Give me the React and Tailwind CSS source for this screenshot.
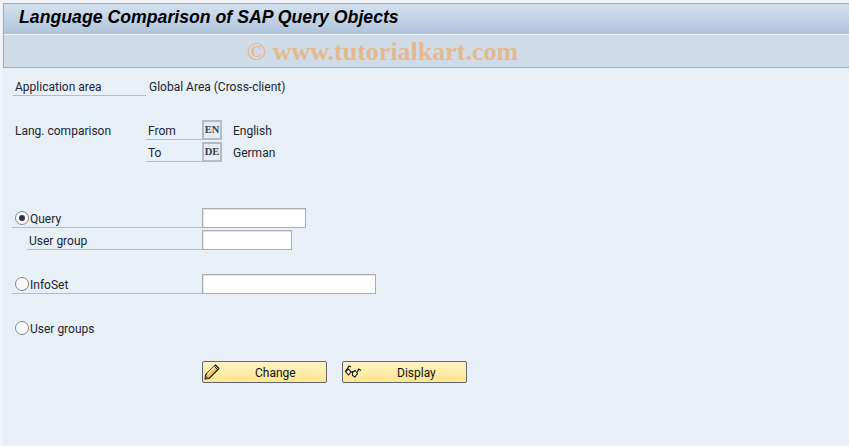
const font = { fontFamily: 'Roboto, sans-serif' };

function Radio({ checked }) {
    return (
        <span className="flex h-[14px] w-[14px] shrink-0 items-center justify-center rounded-full border border-[#7d8690] bg-[#f7f9fb]">
            {checked && <span className="h-[6px] w-[6px] rounded-full bg-[#2b3440]" />}
        </span>
    );
}

function Input({ width }) {
    return <div className={`h-[20px] border border-[#a9adb1] bg-white shadow-[inset_1px_1px_0_#dfe3e6] ${width}`} />;
}

function LangKey({ code }) {
    return (
        <div className="flex h-[20px] w-[20px] items-center justify-center border-2 border-[#b4bbc2] bg-[#e3ebf3] font-['Liberation_Serif',serif] text-[10.5px] font-bold text-[#3f3b46]">
            {code}
        </div>
    );
}

function Pencil() {
    return (
        <svg width="16" height="16" viewBox="0 0 16 16" className="shrink-0">
            <path d="M11.5 1 L15 4.5 L5 14.5 L1 15 L1.5 11 Z" fill="#f6c25a" stroke="#1c1c1c" strokeWidth="1.1" strokeLinejoin="round" />
            <path d="M3.5 10 L11 2.5" stroke="#fff2c8" strokeWidth="1.2" />
            <path d="M10.5 2.5 L13.5 5.5" stroke="#1c1c1c" strokeWidth="1" />
            <path d="M1.5 12 L4 14.5" stroke="#7a5a20" strokeWidth="1.2" />
        </svg>
    );
}

function Glasses() {
    return (
        <svg width="18" height="16" viewBox="0 0 18 16" fill="none" stroke="#111" strokeWidth="1.1" className="shrink-0">
            <path d="M1.5 7.5 L5 2 L7 3" />
            <path d="M1.5 7.5 L4.5 5 L7 8 L4.5 11 Z" fill="#fff7d0" />
            <path d="M7 8 L9 7.5" />
            <path d="M8.5 8.5 L11 6.5 L13.5 9.5 L11 13 L8.5 11.5 Z" fill="#fff7d0" />
            <path d="M13.5 8 L14.5 5 L17 6.5" />
        </svg>
    );
}

function SapButton({ icon, label, textClass }) {
    return (
        <button className="relative flex h-[22px] w-[125px] items-center rounded-[2px] border border-[#62676d] bg-gradient-to-b from-[#fff3c2] to-[#fee68f] pl-[1px] text-[12px] text-[#111]">
            {icon}
            <span className={`absolute top-[2px] ${textClass}`}>{label}</span>
        </button>
    );
}

export default function App() {
    return (
        <div className="h-[446px] w-[849px] overflow-hidden bg-[#e8eff7] pl-[3px] text-[12px] text-[#1c2530] shadow-[inset_2px_0_0_#f1f5f9]" style={font}>
            {/* Title and toolbar */}
            <div className="h-[3px] -ml-[3px] bg-[#eef2f6]" />
            <div className="border-t border-l border-[#a3adb8]">
                <div className="flex h-[30px] items-center bg-gradient-to-b from-[#d5e1ee] to-[#aec4dc] pb-[4px] pl-[15px] font-['Liberation_Sans',sans-serif] text-[17.7px] font-bold italic text-black">
                    Language Comparison of SAP Query Objects
                </div>
                <div className="flex h-[34px] items-center justify-center border-t border-b border-t-[#eef3f8] border-b-[#a3adb8] bg-[#cfdce7] pr-[88px] font-['Liberation_Serif',serif] text-[26px] font-bold text-[#e5b98e]">
                    © www.tutorialkart.com
                </div>
            </div>

            {/* Form */}
            <div className="-ml-[3px] pt-[8px]">
                <div className="flex h-[22px]">
                    <div className="ml-[13px] h-[20px] w-[133px] border-b border-[#b4bcc4] pl-[2px] leading-[22px]">Application area</div>
                    <div className="ml-[3px] leading-[22px]">Global Area (Cross-client)</div>
                </div>

                <div className="mt-[22px] flex h-[22px]">
                    <div className="ml-[15px] w-[131px] leading-[22px]">Lang. comparison</div>
                    <div className="h-[20px] w-[56px] border-b border-[#b4bcc4] pl-[2px] leading-[22px]">From</div>
                    <LangKey code="EN" />
                    <div className="ml-[11px] leading-[22px]">English</div>
                </div>
                <div className="flex h-[22px]">
                    <div className="ml-[146px] h-[20px] w-[56px] border-b border-[#b4bcc4] pl-[2px] leading-[22px]">To</div>
                    <LangKey code="DE" />
                    <div className="ml-[11px] leading-[22px]">German</div>
                </div>

                <div className="mt-[44px] flex h-[22px]">
                    <div className="ml-[12px] flex h-[20px] w-[190px] items-center gap-[1px] border-b border-[#b4bcc4] pl-[3px] leading-[22px]">
                        <Radio checked />
                        <span className="pt-[2px]">Query</span>
                    </div>
                    <Input width="w-[104px]" />
                </div>
                <div className="flex h-[22px]">
                    <div className="ml-[27px] h-[20px] w-[175px] border-b border-[#b4bcc4] pl-[2px] leading-[22px]">User group</div>
                    <Input width="w-[90px]" />
                </div>

                <div className="mt-[22px] flex h-[22px]">
                    <div className="ml-[12px] flex h-[20px] w-[190px] items-center gap-[1px] border-b border-[#b4bcc4] pl-[3px] leading-[22px]">
                        <Radio />
                        <span className="pt-[2px]">InfoSet</span>
                    </div>
                    <Input width="w-[174px]" />
                </div>

                <div className="mt-[22px] flex h-[22px]">
                    <div className="ml-[15px] flex h-[20px] items-center gap-[1px] leading-[22px]">
                        <Radio />
                        <span className="pt-[2px]">User groups</span>
                    </div>
                </div>

                <div className="ml-[202px] mt-[21px] flex gap-[15px]">
                    <SapButton icon={<Pencil />} label="Change" textClass="left-[52px]" />
                    <SapButton icon={<Glasses />} label="Display" textClass="left-[54px]" />
                </div>
            </div>
        </div>
    );
}
